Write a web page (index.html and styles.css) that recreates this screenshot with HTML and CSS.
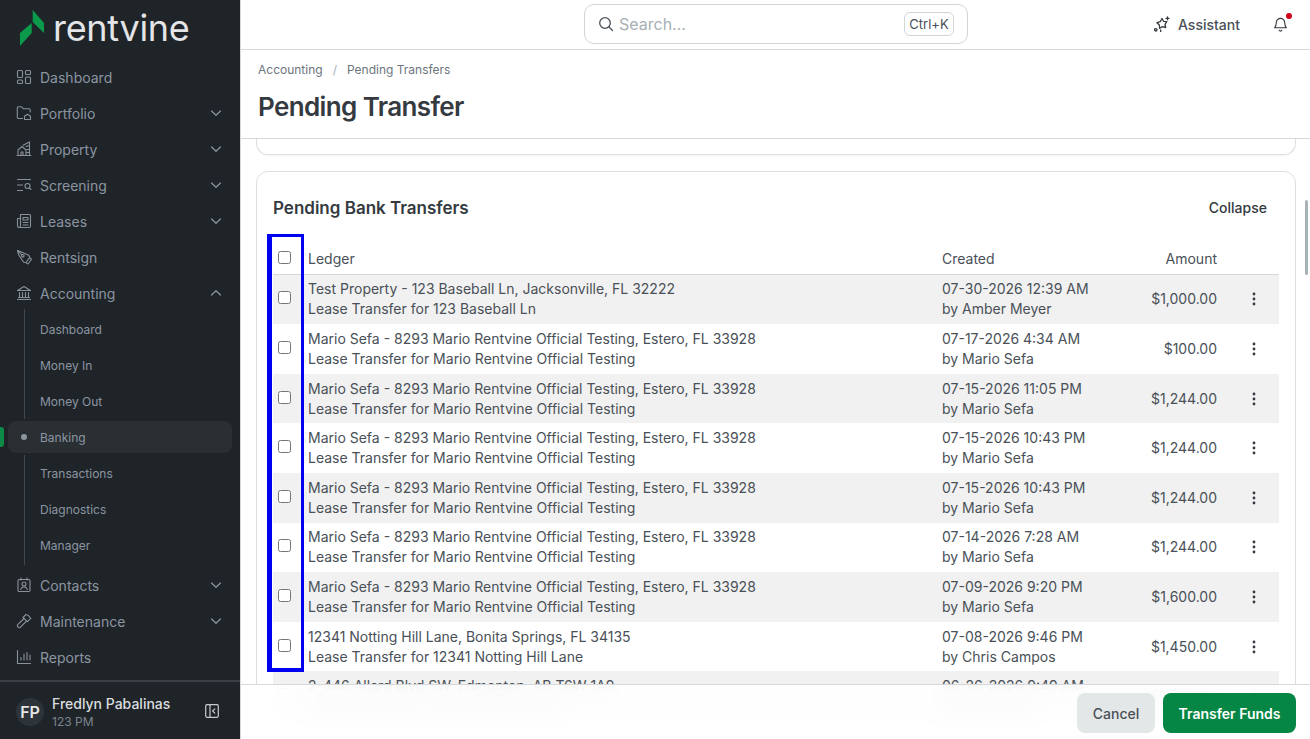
FILE: index.html
```html
<!DOCTYPE html>
<html lang="en">
<head>
  <meta charset="UTF-8">
  <meta name="viewport" content="width=device-width, initial-scale=1.0">
  <title>Pending Transfer</title>
  <link rel="stylesheet" href="styles.css">
</head>
<body>

<svg class="defs" width="0" height="0" aria-hidden="true">
  <symbol id="chev-down" viewBox="0 0 12 12"><path d="M1.500 4l4.500 4.300L10.500 4" fill="none" stroke="currentColor" stroke-width="1.200" stroke-linecap="round" stroke-linejoin="round"/></symbol>
  <symbol id="chev-up" viewBox="0 0 12 12"><path d="M1.500 8l4.500-4.300L10.500 8" fill="none" stroke="currentColor" stroke-width="1.200" stroke-linecap="round" stroke-linejoin="round"/></symbol>
  <symbol id="kebab" viewBox="0 0 16 16"><circle cx="8" cy="3" r="1.400"/><circle cx="8" cy="8" r="1.400"/><circle cx="8" cy="13" r="1.400"/></symbol>
</svg>

<aside class="sidebar">
  <div class="logo">
    <svg class="logo-mark" viewBox="0 0 24 36" width="24" height="36"><path fill="#0b9a4b" d="M12.700 0L24 13v10L12.700 12z"/><path fill="#0b9a4b" d="M0 23L11.700 13v10L0 36z"/></svg>
    <span class="logo-text">rentvine</span>
  </div>

  <nav class="nav">
    <a class="nav-item"><svg class="nav-icon" viewBox="0 0 16 16"><rect x="1.500" y="1.500" width="5" height="7" rx="1"/><rect x="9.500" y="1.500" width="5" height="4" rx="1"/><rect x="1.500" y="11" width="5" height="3.500" rx="1"/><rect x="9.500" y="8" width="5" height="6.500" rx="1"/></svg>Dashboard</a>
    <a class="nav-item"><svg class="nav-icon" viewBox="0 0 16 16"><path d="M6.500 13.500H2.500a1.200 1.200 0 0 1-1.200-1.200V3a1.200 1.200 0 0 1 1.200-1.200h3l2 2h5.500a1.200 1.200 0 0 1 1.200 1.200v2"/><path d="M8.500 14.500v-3.300l3-2 3 2v3.300z"/></svg>Portfolio<svg class="chev"><use href="#chev-down"/></svg></a>
    <a class="nav-item"><svg class="nav-icon" viewBox="0 0 16 16"><path d="M1 14.500h14M2 14.500V9l4-3.500L10 9v5.500M5 14.500v-3.500h2v3.500M7 4.200L13.500 1v13.500M10 5.500l3.500-1M11 8.500h2.500M11 11.500h2.500"/></svg>Property<svg class="chev"><use href="#chev-down"/></svg></a>
    <a class="nav-item"><svg class="nav-icon" viewBox="0 0 16 16"><path d="M1.500 2.500h13M1.500 8h5M1.500 13.500h5"/><circle cx="11.500" cy="9" r="2.500"/><path d="M13.300 10.800l1.700 1.700"/></svg>Screening<svg class="chev"><use href="#chev-down"/></svg></a>
    <a class="nav-item"><svg class="nav-icon" viewBox="0 0 16 16"><path d="M4.500 1.500h9a1 1 0 0 1 1 1v10.500a1.500 1.500 0 0 1-1.500 1.500H3a1.500 1.500 0 0 1-1.500-1.500V5.500h3"/><path d="M4.500 1.500V13a1.500 1.500 0 0 1-1.500 1.500"/><path d="M7 4.500h5v2.500H7zM7 9.500h5M7 12h5"/></svg>Leases<svg class="chev"><use href="#chev-down"/></svg></a>
    <a class="nav-item"><svg class="nav-icon" viewBox="0 0 16 16"><path d="M1.500 1.500l3.300 1.200 8 3.500.9 2.100-3.700 5.200-2.300-.3-5-7.200z"/><path d="M1.500 1.500l4.300 4.300"/><circle cx="6.800" cy="6.800" r="1.300"/><path d="M10.500 14l1.500 1 3.500-4.800-1.500-1.200"/></svg>Rentsign</a>
    <a class="nav-item"><svg class="nav-icon" viewBox="0 0 16 16"><path d="M1.500 5.500L8 1.500l6.500 4zM1.500 14.500h13M2.500 12.500h11M3.500 7.500v5M6.500 7.500v5M9.500 7.500v5M12.500 7.500v5"/></svg>Accounting<svg class="chev"><use href="#chev-up"/></svg></a>

    <div class="subnav">
      <a class="sub-item">Dashboard</a>
      <a class="sub-item">Money In</a>
      <a class="sub-item">Money Out</a>
      <a class="sub-item active">Banking</a>
      <a class="sub-item">Transactions</a>
      <a class="sub-item">Diagnostics</a>
      <a class="sub-item">Manager</a>
    </div>

    <a class="nav-item"><svg class="nav-icon" viewBox="0 0 16 16"><rect x="2" y="2.500" width="12" height="12" rx="1.200"/><path d="M5 1v2M11 1v2"/><circle cx="8" cy="7" r="2"/><path d="M4.800 12.500c.3-1.700 1.500-2.500 3.200-2.500s2.900.8 3.200 2.500"/></svg>Contacts<svg class="chev"><use href="#chev-down"/></svg></a>
    <a class="nav-item"><svg class="nav-icon" viewBox="0 0 16 16"><path d="M8 5.500l-6.300 6.200a1.300 1.300 0 0 0 0 1.800l.8.800a1.300 1.300 0 0 0 1.800 0L10.500 8"/><path d="M7 4.500L10 1.500c1.500.3 3 1.300 3.800 2.800l1 1-3.300 3.300z"/></svg>Maintenance<svg class="chev"><use href="#chev-down"/></svg></a>
    <a class="nav-item"><svg class="nav-icon" viewBox="0 0 16 16"><path d="M1.500 1.500v13h13M5 11V8.500M8 11V5M11 11V3.500M14 11V6"/></svg>Reports</a>
  </nav>

  <div class="user">
    <span class="avatar">FP</span>
    <div class="user-info">
      <div class="user-name">Fredlyn Pabalinas</div>
      <div class="user-org">123 PM</div>
    </div>
    <svg class="collapse-icon" viewBox="0 0 14 14"><rect x="0.700" y="0.700" width="12.600" height="12.600" rx="1.200"/><path d="M5 1v12M9.800 4.800L7.600 7l2.200 2.200"/></svg>
  </div>
</aside>

<div class="main">
  <header class="topbar">
    <div class="search">
      <svg class="search-icon" viewBox="0 0 16 16"><circle cx="7" cy="7" r="5.300"/><path d="M11 11l3.500 3.500"/></svg>
      <span class="search-text">Search...</span>
      <kbd class="kbd">Ctrl+K</kbd>
    </div>
    <div class="assistant">
      <svg class="assistant-icon" viewBox="0 0 16 16"><path d="M8 2.500l1.500 2.800 3.300.4-1.800 2.600.7 3.200-3.200-.9-2.900 1.700-.2-3.300L3 6.700l3.200-1z"/><path d="M13.500.8v3M12 2.300h3"/><circle cx="1.800" cy="13.800" r="1.200"/><path d="M6.700 14v1.400"/></svg>
      Assistant
    </div>
    <div class="bell">
      <svg class="bell-icon" viewBox="0 0 16 16"><path d="M8 1.500a4.500 4.500 0 0 0-4.500 4.500c0 3.500-1.800 5.500-1.800 5.500h12.600s-1.800-2-1.800-5.500A4.500 4.500 0 0 0 8 1.500zM6.500 14.200a1.700 1.700 0 0 0 3 0"/></svg>
      <span class="bell-dot"></span>
    </div>
  </header>

  <div class="page-head">
    <div class="crumbs"><span>Accounting</span><span class="crumb-sep">/</span><span>Pending Transfers</span></div>
    <h1>Pending Transfer</h1>
  </div>

  <div class="content">
    <div class="card-end"></div>

    <section class="card">
      <div class="card-head">
        <h2>Pending Bank Transfers</h2>
        <span class="collapse">Collapse</span>
      </div>

      <div class="table">
        <div class="row head">
          <div class="c-check"><input type="checkbox"></div>
          <div class="c-ledger">Ledger</div>
          <div class="c-created">Created</div>
          <div class="c-amount">Amount</div>
          <div class="c-menu"></div>
        </div>

        <div class="row">
          <div class="c-check"><input type="checkbox"></div>
          <div class="c-ledger">Test Property - 123 Baseball Ln, Jacksonville, FL 32222<br>Lease Transfer for 123 Baseball Ln</div>
          <div class="c-created">07-30-2026 12:39 AM<br>by Amber Meyer</div>
          <div class="c-amount">$1,000.00</div>
          <div class="c-menu"><svg class="kebab"><use href="#kebab"/></svg></div>
        </div>
        <div class="row">
          <div class="c-check"><input type="checkbox"></div>
          <div class="c-ledger">Mario Sefa - 8293 Mario Rentvine Official Testing, Estero, FL 33928<br>Lease Transfer for Mario Rentvine Official Testing</div>
          <div class="c-created">07-17-2026 4:34 AM<br>by Mario Sefa</div>
          <div class="c-amount">$100.00</div>
          <div class="c-menu"><svg class="kebab"><use href="#kebab"/></svg></div>
        </div>
        <div class="row">
          <div class="c-check"><input type="checkbox"></div>
          <div class="c-ledger">Mario Sefa - 8293 Mario Rentvine Official Testing, Estero, FL 33928<br>Lease Transfer for Mario Rentvine Official Testing</div>
          <div class="c-created">07-15-2026 11:05 PM<br>by Mario Sefa</div>
          <div class="c-amount">$1,244.00</div>
          <div class="c-menu"><svg class="kebab"><use href="#kebab"/></svg></div>
        </div>
        <div class="row">
          <div class="c-check"><input type="checkbox"></div>
          <div class="c-ledger">Mario Sefa - 8293 Mario Rentvine Official Testing, Estero, FL 33928<br>Lease Transfer for Mario Rentvine Official Testing</div>
          <div class="c-created">07-15-2026 10:43 PM<br>by Mario Sefa</div>
          <div class="c-amount">$1,244.00</div>
          <div class="c-menu"><svg class="kebab"><use href="#kebab"/></svg></div>
        </div>
        <div class="row">
          <div class="c-check"><input type="checkbox"></div>
          <div class="c-ledger">Mario Sefa - 8293 Mario Rentvine Official Testing, Estero, FL 33928<br>Lease Transfer for Mario Rentvine Official Testing</div>
          <div class="c-created">07-15-2026 10:43 PM<br>by Mario Sefa</div>
          <div class="c-amount">$1,244.00</div>
          <div class="c-menu"><svg class="kebab"><use href="#kebab"/></svg></div>
        </div>
        <div class="row">
          <div class="c-check"><input type="checkbox"></div>
          <div class="c-ledger">Mario Sefa - 8293 Mario Rentvine Official Testing, Estero, FL 33928<br>Lease Transfer for Mario Rentvine Official Testing</div>
          <div class="c-created">07-14-2026 7:28 AM<br>by Mario Sefa</div>
          <div class="c-amount">$1,244.00</div>
          <div class="c-menu"><svg class="kebab"><use href="#kebab"/></svg></div>
        </div>
        <div class="row">
          <div class="c-check"><input type="checkbox"></div>
          <div class="c-ledger">Mario Sefa - 8293 Mario Rentvine Official Testing, Estero, FL 33928<br>Lease Transfer for Mario Rentvine Official Testing</div>
          <div class="c-created">07-09-2026 9:20 PM<br>by Mario Sefa</div>
          <div class="c-amount">$1,600.00</div>
          <div class="c-menu"><svg class="kebab"><use href="#kebab"/></svg></div>
        </div>
        <div class="row">
          <div class="c-check"><input type="checkbox"></div>
          <div class="c-ledger">12341 Notting Hill Lane, Bonita Springs, FL 34135<br>Lease Transfer for 12341 Notting Hill Lane</div>
          <div class="c-created">07-08-2026 9:46 PM<br>by Chris Campos</div>
          <div class="c-amount">$1,450.00</div>
          <div class="c-menu"><svg class="kebab"><use href="#kebab"/></svg></div>
        </div>
        <div class="row">
          <div class="c-check"><input type="checkbox"></div>
          <div class="c-ledger">2-446 Allard Blvd SW, Edmonton, AB T6W 1A9<br>Lease Transfer for 446 Allard Blvd SW</div>
          <div class="c-created">06-26-2026 9:49 AM<br>by Mario Sefa</div>
          <div class="c-amount">$1,200.00</div>
          <div class="c-menu"><svg class="kebab"><use href="#kebab"/></svg></div>
        </div>
      </div>

      <!-- highlight box round the checkbox column -->
      <div class="highlight"></div>
    </section>

    <div class="scroll-thumb"></div>
  </div>

  <footer class="actions">
    <button class="btn btn-cancel">Cancel</button>
    <button class="btn btn-primary">Transfer Funds</button>
  </footer>
</div>

</body>
</html>
```

FILE: styles.css
```css
* { box-sizing: border-box; }
html, body { height: 100%; }
body {
  margin: 0;
  display: flex;
  height: 100vh;
  overflow: hidden;
  font-family: Inter, "Noto Sans", sans-serif;
  font-size: 14px;
  color: #343a40;
  background: #fff;
}
.defs { position: absolute; }

/* sidebar */
.sidebar {
  width: 240px;
  flex: none;
  display: flex;
  flex-direction: column;
  background: #1f2429;
  color: #8b95a1;
}
.logo {
  height: 59px;
  flex: none;
  padding: 10px 0 0 20px;
  display: flex;
  align-items: flex-start;
  gap: 9px;
}
.logo-text {
  font-size: 36px;
  line-height: 36px;
  letter-spacing: -0.300px;
  font-weight: 400;
  color: #e3e5e7;
}
.nav { flex: 1; }
.nav-item {
  height: 36px;
  display: flex;
  align-items: center;
  padding: 0 17px 0 16px;
  gap: 8px;
  font-size: 14px;
}
.nav-icon {
  width: 16px;
  height: 16px;
  flex: none;
  fill: none;
  stroke: #8b9198;
  stroke-width: 1.100;
  stroke-linecap: round;
  stroke-linejoin: round;
}
.chev { width: 12px; height: 12px; margin-left: auto; margin-right: 1px; }
.subnav { margin-bottom: 4px; }
.sub-item {
  height: 36px;
  display: flex;
  align-items: center;
  padding-left: 40px;
  font-size: 12px;
  position: relative;
}
.sub-item::before {
  content: "";
  position: absolute;
  left: 24px;
  top: 0;
  bottom: 0;
  width: 1px;
  background: #41484e;
}
.sub-item:first-child::before { top: -2px; }
.sub-item:last-child::before { bottom: -2px; }
.sub-item.active {
  margin: 2px 8px;
  padding-left: 32px;
  height: 32px;
  background: #2a2f34;
  border-radius: 8px;
}
.sub-item.active::before {
  top: 13px;
  bottom: auto;
  left: 13px;
  width: 6px;
  height: 6px;
  border-radius: 50%;
  background: #8b95a1;
}
.sub-item.active::after {
  content: "";
  position: absolute;
  left: -8px;
  top: 6px;
  width: 4px;
  height: 20px;
  background: #0b8b47;
  border-radius: 0 3px 3px 0;
}
.user {
  height: 59px;
  flex: none;
  border-top: 2px solid #3a4045;
  display: flex;
  align-items: center;
  padding: 3px 21px 0 16px;
  gap: 8px;
}
.avatar {
  width: 28px;
  height: 28px;
  border-radius: 50%;
  background: #2d3439;
  color: #e3e5e7;
  font-size: 16px;
  font-weight: 600;
  display: flex;
  align-items: center;
  justify-content: center;
  flex: none;
}
.user-info { flex: 1; }
.user-name { font-size: 14px; font-weight: 500; line-height: 18px; color: #dadddf; }
.user-org { font-size: 12px; line-height: 17px; color: #7b848d; }
.collapse-icon {
  width: 14px;
  height: 14px;
  margin-top: -3px;
  fill: none;
  stroke: #c6cacd;
  stroke-width: 1.200;
  stroke-linecap: round;
  stroke-linejoin: round;
}

/* main */
.main {
  flex: 1;
  min-width: 0;
  position: relative;
  display: flex;
  flex-direction: column;
  border-left: 1px solid #d6d8da;
}
.topbar {
  height: 50px;
  flex: none;
  border-bottom: 1px solid #d6d8da;
  display: flex;
  align-items: center;
  padding: 0 22px 1px 343px;
}
.search {
  width: 384px;
  height: 40px;
  border: 1px solid #d3d6d9;
  border-radius: 10px;
  display: flex;
  align-items: center;
  padding: 0 13px;
}
.search-icon {
  width: 16px;
  height: 16px;
  margin-right: 5px;
  fill: none;
  stroke: #495057;
  stroke-width: 1.300;
  stroke-linecap: round;
}
.search-text { font-size: 16px; color: #a7afb5; flex: 1; }
.kbd {
  font-family: inherit;
  font-size: 13px;
  height: 24px;
  width: 50px;
  border: 1px solid #d3d6d9;
  border-radius: 6px;
  display: flex;
  align-items: center;
  justify-content: center;
  color: #495057;
}
.assistant {
  margin-left: auto;
  display: flex;
  align-items: center;
  gap: 8px;
  font-weight: 500;
  font-size: 14px;
  color: #495057;
}
.assistant-icon {
  width: 16px;
  height: 16px;
  fill: none;
  stroke: #343a40;
  stroke-width: 1.300;
  stroke-linecap: round;
  stroke-linejoin: round;
}
.bell { position: relative; margin-left: 33px; width: 15px; height: 15px; }
.bell-icon {
  display: block;
  width: 15px;
  height: 15px;
  fill: none;
  stroke: #343a40;
  stroke-width: 1.200;
  stroke-linecap: round;
  stroke-linejoin: round;
}
.bell-dot {
  position: absolute;
  top: -4px;
  right: -4px;
  width: 6px;
  height: 6px;
  border-radius: 50%;
  background: #d0021b;
}
.page-head {
  height: 89px;
  flex: none;
  border-bottom: 1px solid #d6d8da;
  padding: 12px 17px 0;
}
.crumbs { font-size: 12px; line-height: 16px; color: #6c757d; display: flex; }
.crumb-sep { margin: 0 10px; color: #a7afb5; }
h1 {
  margin: 12px 0 0;
  font-size: 26px;
  line-height: 34px;
  font-weight: 600;
  letter-spacing: -0.620px;
  color: #343a40;
}
.content {
  flex: 1;
  min-height: 0;
  overflow: hidden;
  position: relative;
  padding: 0 14px 0 15px;
}
.card-end {
  height: 16px;
  border: 1px solid #dcdfe1;
  border-top: 0;
  border-radius: 0 0 12px 12px;
  box-shadow: 0 1px 2px rgba(0,0,0,0.05);
}
.card {
  position: relative;
  margin-top: 16px;
  border: 1px solid #dcdfe1;
  border-radius: 12px;
  padding: 0 16px;
}
.card-head {
  height: 71px;
  display: flex;
  align-items: center;
  justify-content: space-between;
  padding-right: 12px;
}
h2 { margin: 0; font-size: 17px; font-weight: 600; color: #343a40; }
.collapse { font-size: 14px; font-weight: 500; color: #343a40; }
.row {
  height: 49.600px;
  display: flex;
  align-items: center;
  line-height: 20px;
  font-size: 14px;
  color: #495057;
}
.row.head { height: 32px; margin-bottom: -0.350px; border-bottom: 1px solid #d6d8da; }
.row:nth-child(even) { background: #f1f1f1; }
.c-check { width: 35px; flex: none; padding-left: 5px; display: flex; }
.c-check input { margin: 0 0 3px; width: 13px; height: 13px; }
.c-ledger { flex: 1; }
.c-created { width: 168px; flex: none; }
.c-amount { width: 119px; flex: none; padding-right: 12px; text-align: right; }
.c-menu { width: 50px; flex: none; display: flex; justify-content: center; }
.kebab { width: 16px; height: 16px; fill: #343a40; }
.highlight {
  position: absolute;
  left: 10px;
  top: 62px;
  width: 37px;
  height: 438px;
  border-style: solid;
  border-color: #0000f0;
  border-width: 3px 3px 4px 5px;
  pointer-events: none;
}
.scroll-thumb {
  position: absolute;
  top: 61px;
  right: 2px;
  width: 3px;
  height: 75px;
  background: #a9b4b6;
  border-radius: 2px;
}

/* footer */
.actions {
  position: absolute;
  left: 0;
  right: 0;
  bottom: 0;
  height: 55px;
  border-top: 1px solid #d6d8da;
  background: rgba(255,255,255,0.9);
  backdrop-filter: blur(12px);
  display: flex;
  justify-content: flex-end;
  align-items: flex-start;
  padding: 8px 14px 0 0;
  gap: 8px;
}
.btn {
  height: 40px;
  border: 0;
  border-radius: 8px;
  font-family: inherit;
  font-size: 14px;
  font-weight: 600;
}
.btn-cancel { width: 78px; background: #e4e7e8; color: #495057; font-weight: 500; }
.btn-primary { width: 133px; background: #058644; color: #fff; }
```
